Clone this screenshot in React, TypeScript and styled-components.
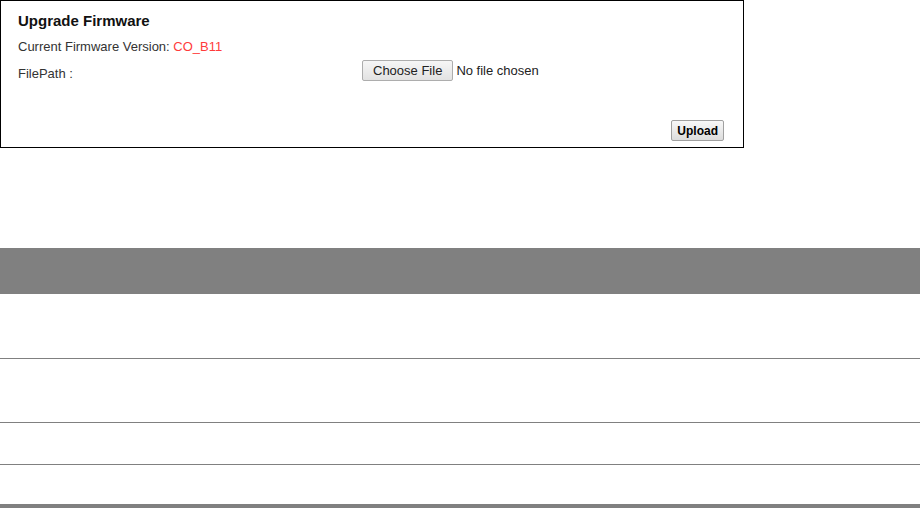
import styled, { createGlobalStyle } from "styled-components";

const GlobalStyle = createGlobalStyle`
  html, body {
    margin: 0;
    padding: 0;
    background: #fff;
    font-family: "Liberation Sans", Arial, sans-serif;
  }
`;

const Page = styled.div`
  width: 920px;
  height: 508px;
  overflow: hidden;
  display: flex;
  flex-direction: column;
`;

const Panel = styled.section`
  flex: none;
  width: 744px;
  height: 148px;
  box-sizing: border-box;
  border: 1px solid #000;
  padding: 11px 19px 6px 17px;
  display: flex;
  flex-direction: column;
`;

const Title = styled.h2`
  margin: 0;
  font-size: 15px;
  line-height: 18px;
  font-weight: bold;
  color: #111;
`;

const Line = styled.div<{ $top: number }>`
  margin-top: ${(p) => p.$top}px;
  display: flex;
  align-items: flex-start;
  font-size: 13px;
  line-height: 16px;
  color: #333;
`;

const Label = styled.span`
  width: 344px;
  flex: none;
  padding-top: 6px;
`;

const Version = styled.span`
  color: #ff3b3b;
`;

const FileButton = styled.button`
  font-family: inherit;
  font-size: 13px;
  height: 21px;
  padding: 0 10px;
  border: 1px solid #adadad;
  border-radius: 2px;
  background: linear-gradient(#f6f6f6, #e2e2e2);
  color: #222;
`;

const NoFile = styled.span`
  margin-left: 3px;
  align-self: center;
  color: #222;
`;

const Footer = styled.div`
  margin-top: auto;
  display: flex;
  justify-content: flex-end;
`;

const UploadButton = styled.button`
  font-family: inherit;
  font-size: 12px;
  font-weight: bold;
  height: 21px;
  padding: 0 5px;
  border: 1px solid #a0a0a0;
  border-radius: 2px;
  background: linear-gradient(#f8f8f8, #dcdcdc);
  color: #000;
`;

const Table = styled.div`
  flex: none;
  margin-top: 100px;
  width: 920px;
  display: flex;
  flex-direction: column;
`;

const HeaderBar = styled.div`
  height: 46px;
  background: #808080;
`;

const Row = styled.div<{ $h: number; $last?: boolean }>`
  height: ${(p) => p.$h}px;
  border-bottom: ${(p) => (p.$last ? "none" : "1px solid #808080")};
`;

const BottomBar = styled.div`
  height: 4px;
  background: #808080;
`;

export default function App() {
  return (
    <Page>
      <GlobalStyle />
      <Panel>
        <Title>Upgrade Firmware</Title>
        <Line $top={9}>
          <span>
            Current Firmware Version: <Version>CO_B11</Version>
          </span>
        </Line>
        <Line $top={5}>
          <Label>FilePath :</Label>
          <FileButton>Choose File</FileButton>
          <NoFile>No file chosen</NoFile>
        </Line>
        <Footer>
          <UploadButton>Upload</UploadButton>
        </Footer>
      </Panel>
      <Table>
        <HeaderBar />
        <Row $h={64} />
        <Row $h={63} />
        <Row $h={41} />
        <Row $h={39} $last />
        <BottomBar />
      </Table>
    </Page>
  );
}
